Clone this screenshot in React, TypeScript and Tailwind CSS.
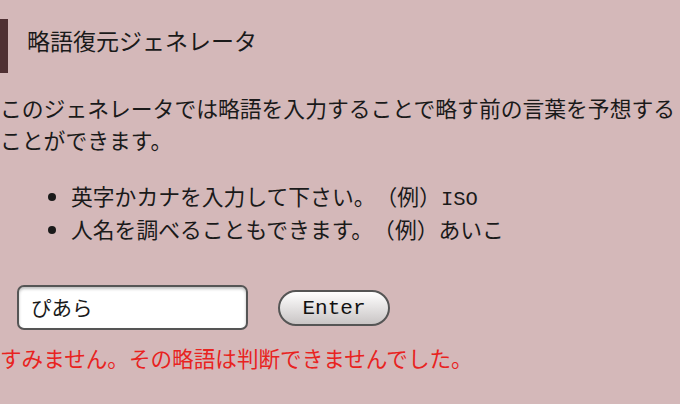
export default function App() {
  return (
    <div
      className="w-[680px] h-[404px] overflow-hidden bg-[#d4b8b9] text-[#1a1a1a] [text-spacing-trim:space-all]"
      style={{ fontFamily: '"Noto Sans CJK JP", "Noto Sans", sans-serif' }}
    >
      {/* Title */}
      <div className="pt-[19px] flex items-stretch h-[73px]">
        <div className="w-[8px] bg-[#4f3033]"></div>
        <h1 className="pl-[19px] text-[23px] leading-[43px] font-normal">略語復元ジェネレータ</h1>
      </div>

      {/* Description */}
      <p className="mt-[19px] text-[21.8px] leading-[32px]">
        このジェネレータでは略語を入力することで略す前の言葉を予想する
        <br />
        ことができます。
      </p>

      {/* Hints */}
      <ul className="mt-[23px] pl-[71px] text-[21.8px] list-disc">
        <li className="h-[33px] leading-[33px]">
          英字かカナを入力して下さい。（例）
          <span className="text-[20.5px]" style={{ fontFamily: '"Liberation Mono", monospace' }}>ISO</span>
        </li>
        <li className="h-[33px] leading-[33px]">人名を調べることもできます。（例）あいこ</li>
      </ul>

      {/* Form */}
      <div className="mt-[40px] flex items-center pl-[17px]">
        <div className="w-[231px] h-[45px] bg-white border-2 border-[#555] rounded-[7px] shadow-[inset_0_2px_3px_rgba(0,0,0,0.25)] flex items-center pl-[12px] text-[20.5px]">
          ぴあら
        </div>
        <button
          className="ml-[30px] mt-[1px] w-[112px] h-[36px] rounded-full border-2 border-[#555] bg-gradient-to-b from-white to-[#c9c5c5] text-[21px] leading-none text-[#111]"
          style={{ fontFamily: '"Liberation Mono", monospace' }}
        >
          Enter
        </button>
      </div>

      {/* Error */}
      <p className="mt-[12px] text-[21.6px] leading-[32px] text-[#e8231f]">
        すみません。その略語は判断できませんでした。
      </p>
    </div>
  );
}
